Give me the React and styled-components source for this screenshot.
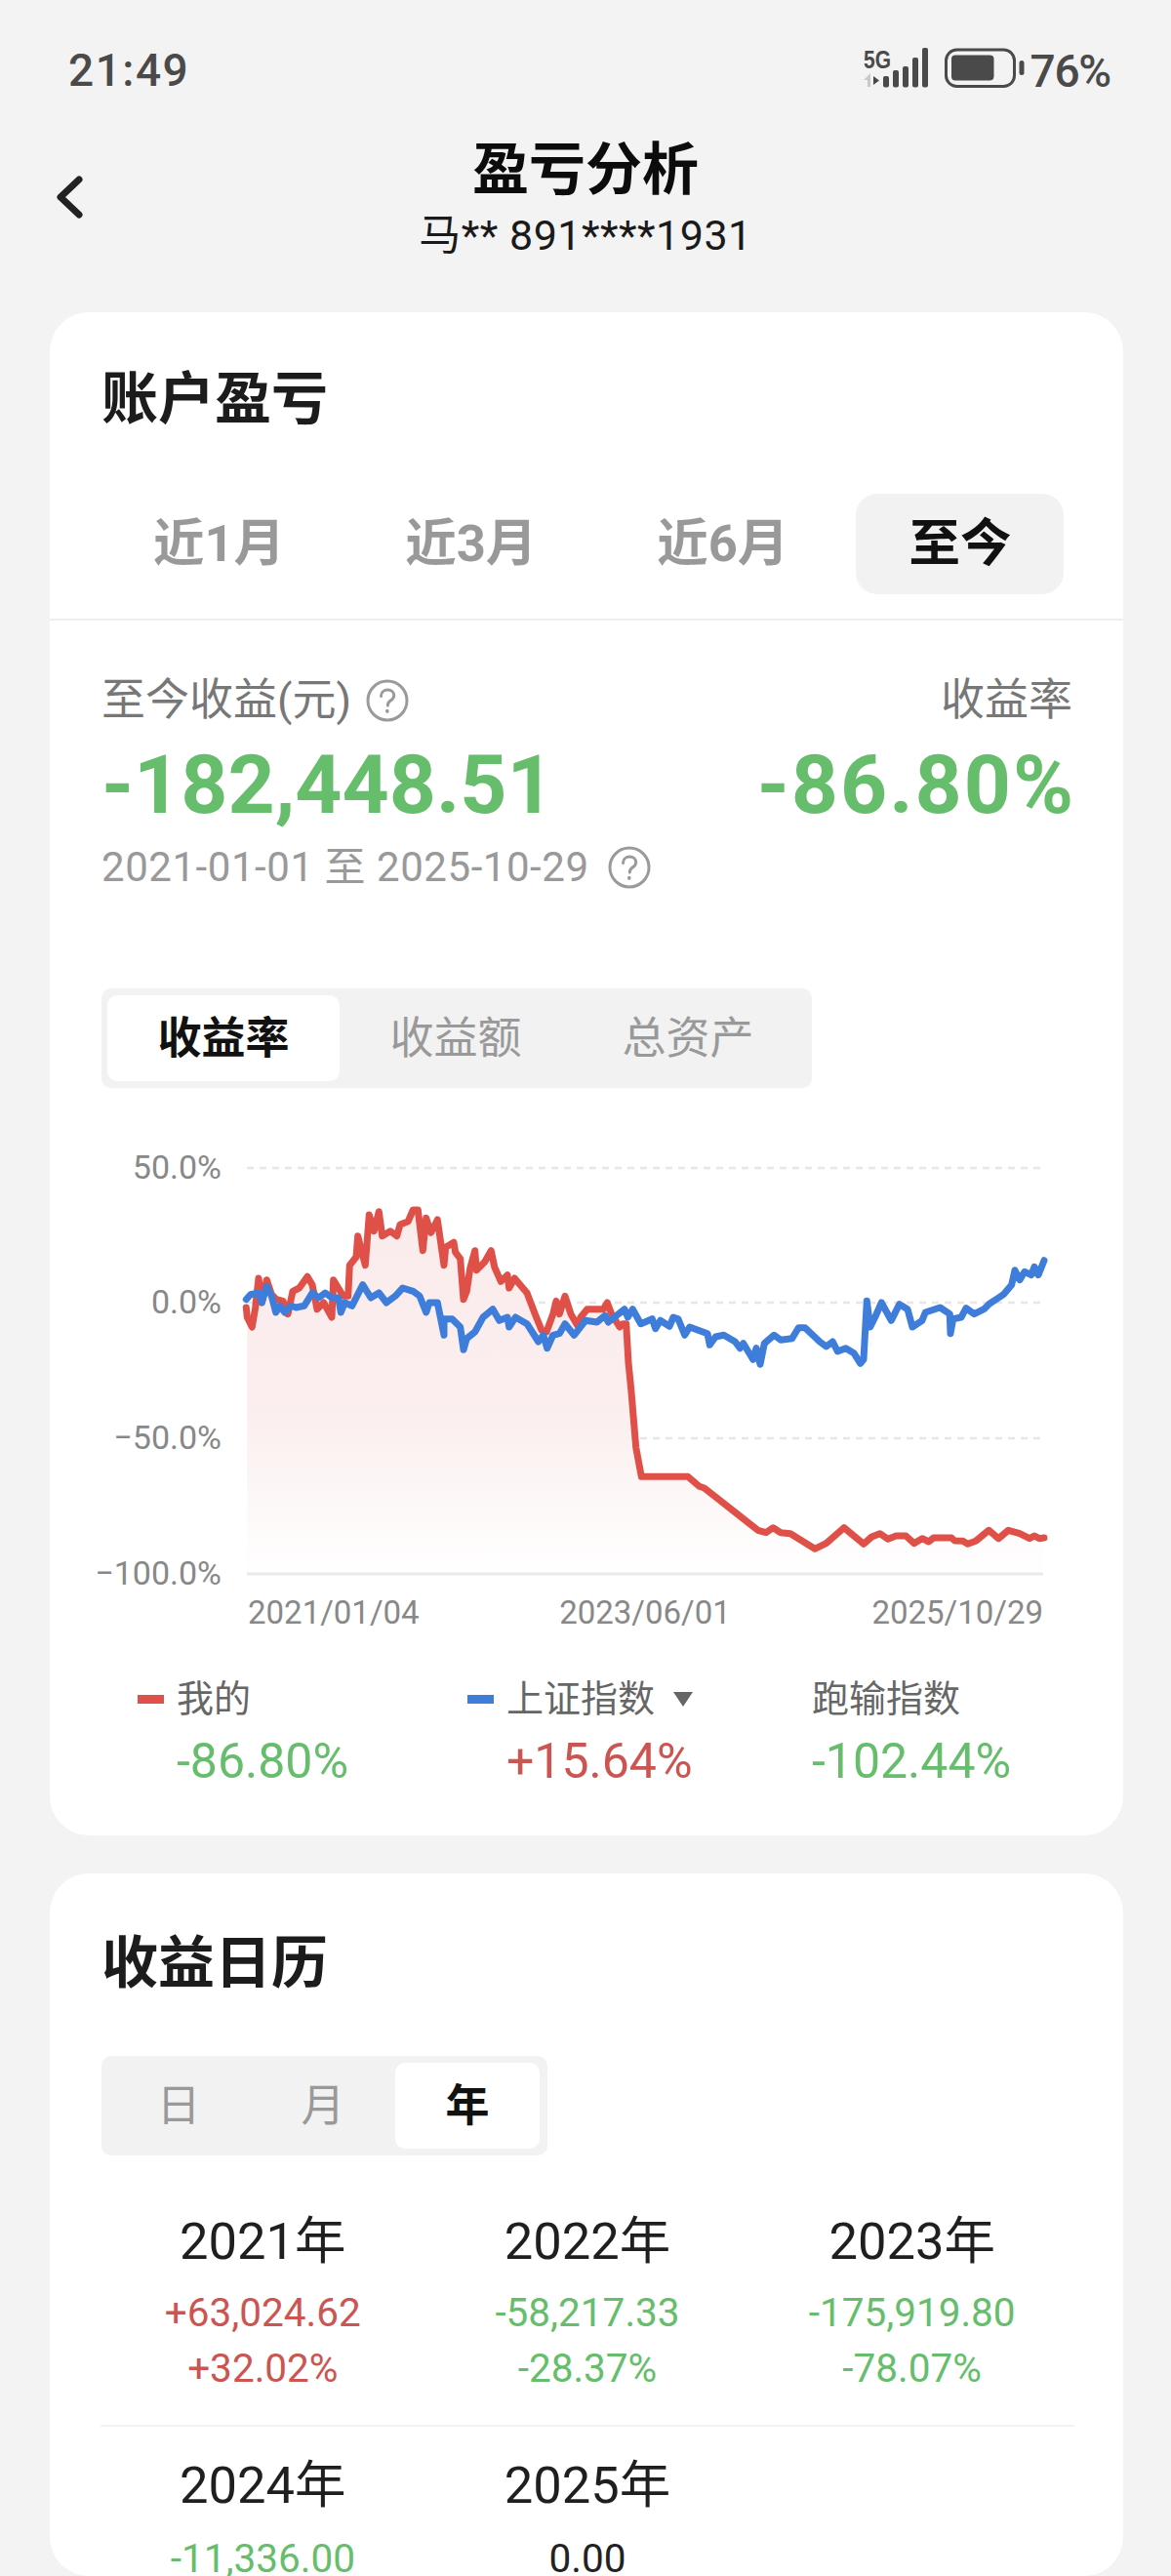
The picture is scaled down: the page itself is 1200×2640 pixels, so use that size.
import React from 'react';
import styled, { createGlobalStyle } from 'styled-components';

const Global = createGlobalStyle`
  html, body { margin: 0; padding: 0; background: #f3f3f3; }
  body { width: 1200px; height: 2640px; overflow: hidden; font-family: Roboto, "Noto Sans CJK SC", sans-serif; }
  #root { width: 1200px; height: 2640px; overflow: hidden; }
`;
const GREEN = '#66bd6b';
const RED = '#cc5551';
const Page = styled.div`width:1200px;height:2640px;overflow:hidden;background:#f3f3f3;color:#222;`;
const StatusBar = styled.div`height:144px;box-sizing:border-box;padding:0 62px 0 70px;display:flex;align-items:center;justify-content:space-between;color:#4a4a4a;`;
const Time = styled.div`font-size:46px;font-weight:500;letter-spacing:1.5px;`;
const StatusRight = styled.div`display:flex;align-items:center;`;
const BatteryPct = styled.div`font-size:46px;font-weight:500;letter-spacing:-1.2px;margin-top:2px;`;
const Header = styled.header`height:176px;display:grid;grid-template-columns:1fr auto 1fr;align-items:start;`;
const BackBtn = styled.div`padding:36px 0 0 56px;color:#222;display:flex;`;
const TitleBlock = styled.div`display:flex;flex-direction:column;align-items:center;`;
const Title = styled.h1`margin:0;font-size:58px;line-height:60px;font-weight:700;color:#0c0c0c;`;
const Sub = styled.div`margin-top:13px;font-size:43px;line-height:48px;color:#1a1a1a;letter-spacing:.5px;white-space:nowrap;`;
const Card = styled.section`width:1100px;margin:0 49px ${p => p.$mb || 0}px 51px;background:#fff;border-radius:40px;box-sizing:border-box;padding:${p => p.$pt}px 0 ${p => p.$pb || 0}px;`;
const CardTitle = styled.h2`margin:0;padding-left:53px;font-size:58px;line-height:60px;font-weight:700;color:#1c1c1c;`;
const RangeTabs = styled.div`display:flex;gap:15px;margin-top:67px;padding:0 0 25px 52px;border-bottom:2px solid #eeeeee;`;
const RangeTab = styled.div`height:103px;box-sizing:border-box;padding:0 54px 12px;display:flex;align-items:center;border-radius:22px;font-size:52.500px;font-weight:700;color:${p => (p.$active ? '#111' : '#999')};background:${p => (p.$active ? '#f2f2f2' : 'transparent')};`;
const Stats = styled.div`padding:58px 52px 0 53px;display:flex;justify-content:space-between;`;
const StatCol = styled.div`display:flex;flex-direction:column;align-items:${p => (p.$right ? 'flex-end' : 'flex-start')};`;
const StatLabel = styled.div`height:48px;font-size:45px;line-height:48px;color:#777;display:flex;align-items:center;gap:15px;`;
const BigNum = styled.div`margin:21px ${p => (p.$ls ? -3 : 0)}px 0 0;font-size:84px;line-height:84px;font-weight:700;letter-spacing:${p => p.$ls || 0}px;color:${GREEN};`;
const DateRow = styled.div`margin-top:18px;padding-left:53px;height:48px;font-size:42px;line-height:48px;color:#999;display:flex;align-items:center;gap:19px;letter-spacing:.55px;`;
const Segment = styled.div`display:inline-flex;margin:${p => p.$mt}px 0 0 53px;padding:7px 8px 7px ${p => p.$pl}px;background:#f2f2f2;border-radius:10px;vertical-align:top;`;
const SegItem = styled.div`width:${p => p.$w}px;height:88px;padding-bottom:8px;box-sizing:border-box;display:flex;align-items:center;justify-content:center;border-radius:10px;font-size:45px;font-weight:${p => (p.$active ? 700 : 400)};color:${p => (p.$active ? '#111' : '#999')};background:${p => (p.$active ? '#fff' : 'transparent')};`;
const ChartSvg = styled.svg`display:block;margin-top:55px;width:1100px;height:510px;`;
const AxisText = styled.text`font-family:Roboto,sans-serif;font-size:${p => p.$fs}px;fill:#888;`;
const Legend = styled.div`margin-top:37px;display:grid;grid-template-columns:338px 353px auto;padding-left:90px;`;
const LegendLabel = styled.div`height:48px;font-size:38px;line-height:48px;color:#666;display:flex;align-items:center;white-space:nowrap;`;
const Marker = styled.span`width:27px;height:9px;background:${p => p.$c};margin-right:13px;`;
const Caret = styled.span`width:0;height:0;margin-left:19px;border-left:10px solid transparent;border-right:10px solid transparent;border-top:15px solid #666;`;
const LegendVal = styled.div`margin-top:14px;height:52px;padding-left:${p => p.$pl}px;font-size:50px;line-height:52px;color:${p => p.$c};`;
const YearGrid = styled.div`margin:58px 50px 0 52px;display:grid;grid-template-columns:repeat(3,1fr);`;
const YearCell = styled.div`display:flex;flex-direction:column;align-items:center;padding:${p => (p.$second ? '30px 0 0' : '0 0 30px')};`;
const YearName = styled.div`font-size:52.500px;line-height:60px;color:#1f1f1f;`;
const Amount = styled.div`margin-top:${p => p.$mt}px;font-size:40.500px;line-height:${p => p.$lh || 56}px;color:${p => p.$c};white-space:nowrap;`;
const RowRule = styled.div`grid-column:1 / -1;height:2px;background:#f3f3f3;`;

const z4 = s => s.map(([x, y]) => [90 + x / 3, 1150 + y / 3]);
const z5 = s => s.map(([x, y]) => [580 + x / 3, 1150 + y / 3]);
const redPts = [
  ...z4([[487,570],[490,600],[505,630],[515,570],[525,480],[535,555],[550,485],[565,530],[580,545],[600,550],[615,590],[630,520],[650,510],[675,475],[690,500],[705,575],[725,555],[750,600],[755,485],[770,510],[785,535],[800,535],[805,440],[825,415],[830,350],[840,390],[853,440],[865,285],[880,335],[895,275],[905,350],[930,335],[950,350],[960,315],[985,305],[1000,270],[1015,270],[1030,395],[1040,295],[1055,340],[1075,300],[1095,440],[1100,385],[1125,370],[1130,400],[1145,420],[1155,545],[1165,520],[1175,450],[1190,395],[1195,455],[1220,430],[1240,395],[1250,445],[1270,490],[1290,470],[1295,510],[1312,480],[1350,525],[1375,590],[1395,640],[1410,645],[1430,590],[1440,550],[1450,590],[1467,535]]),
  ...z5([[15,590],[35,625],[45,600],[65,575],[115,575],[127,555],[140,590],[165,630],[175,620],[185,620],[192,740],[200,820],[215,1000],[232,1090],[375,1090],[410,1120],[425,1125],[590,1255],[615,1262],[637,1247],[660,1262],[690,1265],[765,1312],[800,1295],[855,1247],[915,1297],[940,1275],[965,1265],[990,1282],[1015,1272],[1045,1272],[1070,1295],[1095,1280],[1115,1290],[1130,1278],[1185,1278],[1195,1287],[1220,1288],[1235,1297],[1260,1288],[1300,1255],[1330,1280],[1360,1255],[1395,1265],[1425,1280],[1440,1272],[1455,1280],[1470,1278]]),
];
const bluePts = [
  ...z4([[487,545],[500,530],[525,525],[535,555],[550,505],[565,535],[578,585],[590,565],[605,585],[625,565],[640,570],[665,565],[690,525],[710,540],[730,525],[750,540],[770,540],[778,585],[790,555],[812,565],[845,500],[870,540],[895,525],[918,555],[945,535],[968,510],[1000,520],[1020,535],[1040,585],[1050,555],[1075,555],[1095,655],[1095,605],[1120,605],[1145,630],[1155,700],[1165,665],[1190,645],[1215,600],[1245,575],[1265,610],[1290,600],[1295,630],[1315,600],[1350,620],[1385,675],[1400,655],[1412,695],[1430,655],[1450,650],[1467,620]]),
  ...z5([[25,655],[60,610],[95,615],[120,595],[130,615],[180,575],[190,600],[205,575],[230,620],[265,605],[275,635],[290,610],[318,628],[330,600],[345,605],[365,655],[380,630],[435,650],[442,685],[460,660],[485,655],[520,675],[535,695],[545,680],[575,730],[585,695],[597,745],[610,680],[640,655],[660,670],[695,665],[715,632],[735,632],[780,675],[800,690],[820,675],[835,705],[860,695],[885,710],[905,742],[915,730],[925,550],[935,630],[950,600],[970,555],[1000,610],[1025,560],[1050,575],[1065,630],[1095,610],[1105,585],[1150,570],[1180,590],[1182,650],[1190,605],[1215,600],[1230,572],[1255,590],[1285,575],[1300,560],[1345,530],[1370,500],[1380,455],[1395,485],[1410,460],[1430,470],[1440,445],[1452,470],[1470,425]]),
];
const toLine = p => p.map(([x, y]) => `${x.toFixed(1)},${y.toFixed(1)}`).join(' ');
const areaPts = `253,1613 ${toLine(redPts.filter(([x]) => x >= 253))} 1068,1613`;

const Help = () => (
  <svg width="44" height="44" viewBox="0 0 44 44" fill="none" stroke="#9a9a9a" strokeWidth="3" strokeLinecap="round">
    <circle cx="22" cy="22" r="20" />
    <path d="M15.5 17.5c0-4 3-6.5 6.7-6.5 3.8 0 6.5 2.4 6.5 5.7 0 2.6-1.5 4-3.5 5.4-1.9 1.3-2.9 2.4-2.9 4.9" />
    <path d="M21.8 32.5v.6" strokeWidth="3.6" />
  </svg>
);

const StatusIcons = () => (
  <svg width="170" height="50" viewBox="885 50 170 50" fill="#4a4a4a">
    <text x="885" y="73" fontFamily="'Liberation Sans',sans-serif" fontSize="26" fontWeight="700" textLength="28" lengthAdjust="spacingAndGlyphs">5G</text>
    <path d="M885 85l7-7v14h-3v-7z" fill="#c9c9c9" />
    <path d="M895 81l6 4.500-6 4.500z" />
    <rect x="905" y="81" width="6" height="11.500" rx="2" />
    <rect x="915" y="75" width="6" height="17.500" rx="2" />
    <rect x="925" y="71" width="6" height="21.500" rx="2" />
    <rect x="935" y="62" width="6" height="30.500" rx="2" />
    <rect x="945" y="52" width="6" height="40.500" rx="2" />
    <rect x="969.500" y="54" width="70" height="37.500" rx="11" fill="none" stroke="#4a4a4a" strokeWidth="3" />
    <rect x="975" y="59.500" width="43.500" height="26" rx="4" />
    <rect x="1044.500" y="65" width="5" height="15" rx="2.500" />
  </svg>
);

const grid = [1197, 1335, 1474];
const yLabels = [['50.0%', 1197], ['0.0%', 1335], ['−50.0%', 1474], ['−100.0%', 1613]];

const Chart = () => (
  <ChartSvg viewBox="51 1170 1100 510">
    <defs>
      <linearGradient id="area" x1="0" y1="0" x2="0" y2="1">
        <stop offset="0" stopColor="#fbecec" />
        <stop offset=".55" stopColor="#fbeeee" />
        <stop offset="1" stopColor="#ffffff" />
      </linearGradient>
    </defs>
    {grid.map(y => <line key={y} x1="253" x2="1068" y1={y} y2={y} stroke="#e7e7e7" strokeWidth="2.500" strokeDasharray="7 6" />)}
    <polygon points={areaPts} fill="url(#area)" />
    <line x1="253" x2="1069" y1="1613" y2="1613" stroke="#e9e9e9" strokeWidth="3" />
    {yLabels.map(([t, y]) => <AxisText $fs={34} key={t} x="227" y={y + 11} textAnchor="end">{t}</AxisText>)}
    <AxisText $fs={33} x="254" y="1664">2021/01/04</AxisText>
    <AxisText $fs={33} x="661" y="1664" textAnchor="middle">2023/06/01</AxisText>
    <AxisText $fs={33} x="1069" y="1664" textAnchor="end">2025/10/29</AxisText>
    <polyline points={toLine(redPts)} fill="none" stroke="#df5049" strokeWidth="7" strokeLinejoin="round" strokeLinecap="round" />
    <polyline points={toLine(bluePts)} fill="none" stroke="#3f7ddb" strokeWidth="7" strokeLinejoin="round" strokeLinecap="round" />
  </ChartSvg>
);

const years = [
  { y: '2021年', a: '+63,024.62', p: '+32.02%', c: RED },
  { y: '2022年', a: '-58,217.33', p: '-28.37%', c: GREEN },
  { y: '2023年', a: '-175,919.80', p: '-78.07%', c: GREEN },
];

export default function App() {
  return (
    <Page>
      <Global />
      <StatusBar>
        <Time>21:49</Time>
        <StatusRight>
          <StatusIcons />
          <BatteryPct>76%</BatteryPct>
        </StatusRight>
      </StatusBar>
      <Header>
        <BackBtn>
          <svg width="30" height="44" viewBox="0 0 30 44" fill="none" stroke="#222" strokeWidth="7" strokeLinecap="round" strokeLinejoin="round">
            <path d="M25 4L6 22l19 18" />
          </svg>
        </BackBtn>
        <TitleBlock>
          <Title>盈亏分析</Title>
          <Sub>马** 891****1931</Sub>
        </TitleBlock>
        <div />
      </Header>
      <Card $mb={39} $pb={50} $pt={59}>
        <CardTitle>账户盈亏</CardTitle>
        <RangeTabs>
          <RangeTab>近1月</RangeTab>
          <RangeTab>近3月</RangeTab>
          <RangeTab>近6月</RangeTab>
          <RangeTab $active>至今</RangeTab>
        </RangeTabs>
        <Stats>
          <StatCol>
            <StatLabel>至今收益(元)<Help /></StatLabel>
            <BigNum>-182,448.51</BigNum>
          </StatCol>
          <StatCol $right>
            <StatLabel>收益率</StatLabel>
            <BigNum $ls={2}>-86.80%</BigNum>
          </StatCol>
        </Stats>
        <DateRow>2021-01-01 至 2025-10-29<Help /></DateRow>
        <Segment $mt={100} $pl={6}>
          <SegItem $w={238} $active>收益率</SegItem>
          <SegItem $w={238}>收益额</SegItem>
          <SegItem $w={238}>总资产</SegItem>
        </Segment>
        <Chart />
        <Legend>
          <div>
            <LegendLabel><Marker $c="#df5049" />我的</LegendLabel>
            <LegendVal $pl={40} $c={GREEN}>-86.80%</LegendVal>
          </div>
          <div>
            <LegendLabel><Marker $c="#3f7ddb" />上证指数<Caret /></LegendLabel>
            <LegendVal $pl={40} $c={RED}>+15.64%</LegendVal>
          </div>
          <div>
            <LegendLabel>跑输指数</LegendLabel>
            <LegendVal $pl={0} $c={GREEN}>-102.44%</LegendVal>
          </div>
        </Legend>
      </Card>
      <Card $pt={62}>
        <CardTitle>收益日历</CardTitle>
        <Segment $mt={65} $pl={5}>
          <SegItem $w={148}>日</SegItem>
          <SegItem $w={148}>月</SegItem>
          <SegItem $w={148} $active>年</SegItem>
        </Segment>
        <YearGrid>
          {years.map(r => (
            <YearCell key={r.y}>
              <YearName>{r.y}</YearName>
              <Amount $mt={15} $c={r.c}>{r.a}</Amount>
              <Amount $mt={1} $c={r.c}>{r.p}</Amount>
            </YearCell>
          ))}
          <RowRule />
          <YearCell $second>
            <YearName>2024年</YearName>
            <Amount $mt={28} $lh={35} $c={GREEN}>-11,336.00</Amount>
          </YearCell>
          <YearCell $second>
            <YearName>2025年</YearName>
            <Amount $mt={28} $lh={35} $c="#222">0.00</Amount>
          </YearCell>
        </YearGrid>
      </Card>
    </Page>
  );
}
